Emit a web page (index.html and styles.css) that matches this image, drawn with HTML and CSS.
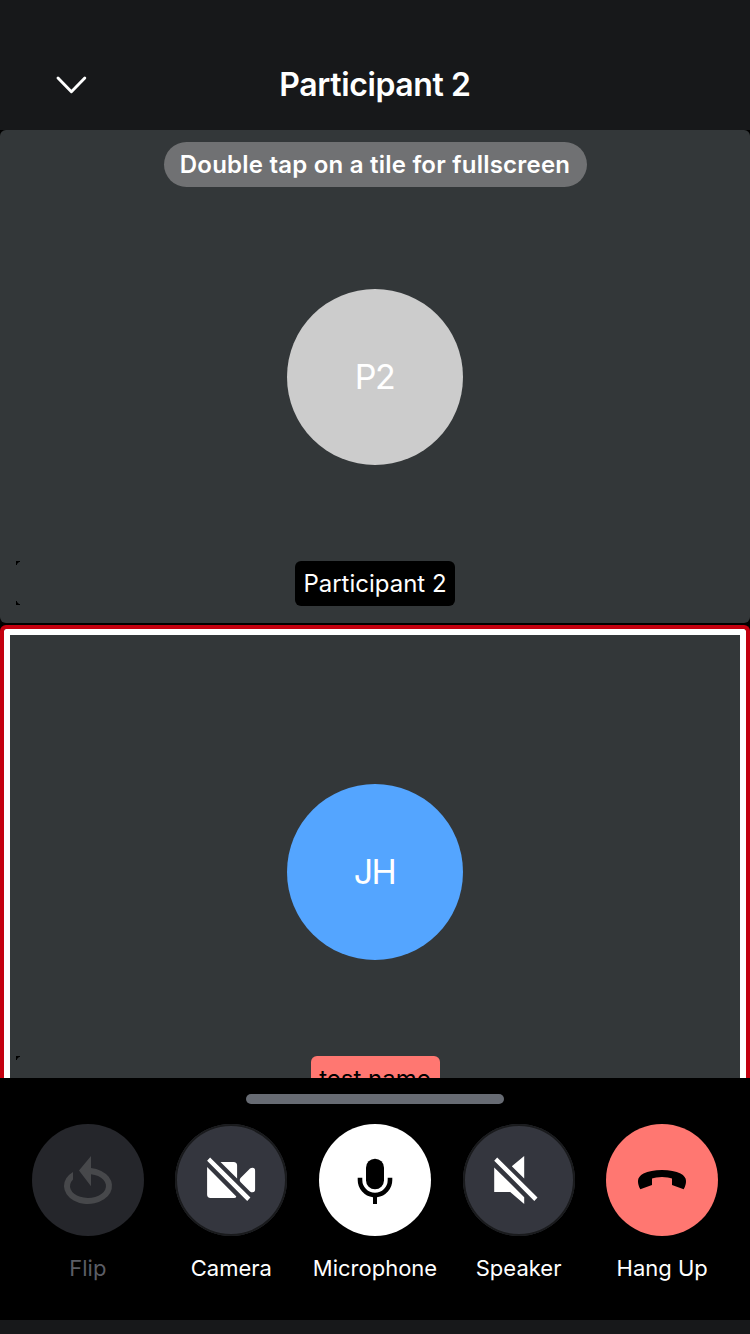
FILE: index.html
```html
<!DOCTYPE html>
<html lang="en">
<head>
<meta charset="utf-8">
<title>Call</title>
<link rel="stylesheet" href="styles.css">
</head>
<body>
<div class="screen">
  <header class="header">
    <svg class="chevron" width="32" height="20" viewBox="0 0 32 20"><path d="M3 3 16.4 16.7 29.8 3"/></svg>
    <h1 class="title">Participant 2</h1>
  </header>
  <main class="stage">
    <section class="tile">
      <div class="hint">Double tap on a tile for fullscreen</div>
      <div class="avatar avatar-grey"><span class="initials">P2</span></div>
      <div class="name">Participant 2</div>
      <svg class="corners" width="4" height="44" viewBox="0 0 4 44"><path d="M0 0H4V1H3L1 3V4H0zM0 40H1V41L3 43H4V44H0z"/></svg>
    </section>
    <section class="tile tile-active">
      <div class="avatar avatar-blue"><span class="initials">JH</span></div>
      <div class="name name-coral">test name</div>
      <svg class="corners" width="4" height="44" viewBox="0 0 4 44"><path d="M0 0H4V1H3L1 3V4H0z"/></svg>
    </section>
  </main>
  <footer class="controls">
    <div class="handle"></div>
    <div class="buttons">
      <div class="control disabled">
        <div class="circle"><svg viewBox="0 0 112 112"><path d="M41 47.9A24 18 0 1 0 59 44.1V32L47 46.5 59 62.3V50.2A18 12 0 1 1 41 55.4z"/></svg></div>
        <span class="label">Flip</span>
      </div>
      <div class="control">
        <div class="circle outlined"><svg viewBox="0 0 112 112"><path d="M32.1 36.7 35.1 33.4 75.4 73.6 72.2 77zM32.1 42.9 61.3 72.5Q61 74 59 74H35.5Q32.1 74 32.1 70.6zM45.5 38H58.5Q62.1 38 62.1 41.6V54.4zM64.7 56Q64.8 54.8 65.5 54L75 44.6Q76 43.7 77.5 43.7 80.1 43.7 80.1 46.5V65.5Q80.1 68.3 77.5 68.3 76 68.3 75 67.4L65.5 58Q64.8 57.2 64.7 56z"/></svg></div>
        <span class="label">Camera</span>
      </div>
      <div class="control">
        <div class="circle white"><svg viewBox="0 0 112 112"><rect x="47" y="34.7" width="18" height="30.6" rx="9"/><path d="M38.7 53.7H43.3V56A12.7 12.7 0 0 0 68.7 56V53.7H73.3V56A17.3 17.3 0 0 1 58 73.2V80H54V73.2A17.3 17.3 0 0 1 38.7 56z"/></svg></div>
        <span class="label">Microphone</span>
      </div>
      <div class="control">
        <div class="circle outlined"><svg viewBox="0 0 112 112"><path d="M31.2 36.7 34.2 33.4 74.5 73.6 71.3 77zM31.2 43.4 61.2 73.2V80L47.2 68H31.2zM48.8 42.3 61.2 32V54.5z"/></svg></div>
        <span class="label">Speaker</span>
      </div>
      <div class="control">
        <div class="circle coral"><svg viewBox="0 0 112 112"><path d="M34.3 65.3C32.5 62 32 59.5 32 57Q32 52.5 37.5 49.5 44.5 46 56 46T74.5 49.5Q80 52.5 80 57C80 59.5 79.5 62 77.7 65.3L66 61V54.6Q62.5 53 56 53T46 54.6V61z"/></svg></div>
        <span class="label">Hang Up</span>
      </div>
    </div>
  </footer>
  <div class="base"></div>
</div>
</body>
</html>
```
FILE: styles.css
```css
* { box-sizing: border-box; }
body { margin: 0; background: #000; font-family: Inter, "Liberation Sans", sans-serif; color: #fff; }
.screen { width: 750px; height: 1334px; display: flex; flex-direction: column; overflow: hidden; background: #000; }
.header { flex: none; height: 130px; padding: 40px 55px 0; background: #17181a; display: grid; grid-template-columns: 32px 1fr 32px; align-items: center; }
.chevron { fill: none; stroke: #fff; stroke-width: 2.9; stroke-linecap: round; stroke-linejoin: round; }
.title { margin: 0; text-align: center; font-size: 32px; font-weight: 600; line-height: 40px; white-space: nowrap; letter-spacing: -0.38px; }
.stage { flex: none; height: 948px; overflow: hidden; display: flex; flex-direction: column; gap: 2px; }
.tile { position: relative; flex: none; height: 493px; border-radius: 6px; background: #333739; display: flex; flex-direction: column; align-items: center; }
.hint { height: 45px; margin: 12px 0 102px; width: 423px; border-radius: 22.5px; background: #707173; display: flex; align-items: center; justify-content: center; font-size: 24px; font-weight: 600; white-space: nowrap; letter-spacing: 0.22px; }
.avatar { flex: none; width: 176px; height: 176px; border-radius: 50%; display: flex; align-items: center; justify-content: center; font-size: 34px; line-height: 40px; }
.avatar-grey { background: #ccc; }
.avatar-blue { background: #54a5ff; }
.initials { margin-top: -1px; margin-right: 1px; letter-spacing: -1.6px; font-weight: 400; }
.name { flex: none; width: 160px; height: 45px; margin-top: 96px; border-radius: 6px; background: #000; display: flex; align-items: center; justify-content: center; font-size: 24px; font-weight: 380; white-space: nowrap; }
.name-coral { width: 129px; background: #ff7771; color: #000; }
.corners { position: absolute; left: 16px; top: 431px; }
.tile-active { height: 495px; padding-top: 155px; border: 4px solid #c4000f; border-bottom: 0; box-shadow: inset 0 0 0 6px #fff; }
.tile-active .corners { left: 12px; top: 427px; }
.controls { flex: none; height: 242px; background: #000; padding: 16px 16px 0; display: flex; flex-direction: column; }
.handle { align-self: center; width: 258px; height: 10px; border-radius: 5px; background: #676b73; margin-bottom: 20px; }
.buttons { display: grid; grid-template-columns: repeat(5, 1fr); }
.control { display: flex; flex-direction: column; align-items: center; gap: 18px; }
.circle { width: 112px; height: 112px; border-radius: 50%; background: #25262b; }
.circle svg { display: block; width: 112px; height: 112px; fill: #fff; }
.outlined { background: #34363e; box-shadow: inset 0 0 0 2px #191a1c; }
.white { background: #fff; }
.white svg, .coral svg { fill: #000; }
.coral { background: #ff7771; }
.disabled svg { fill: #47484b; }
.label { font-size: 22px; line-height: 28px; font-weight: 380; white-space: nowrap; letter-spacing: 0; }
.disabled .label { color: #5b5d65; }
.base { flex: none; height: 14px; background: #17181a; }
```
